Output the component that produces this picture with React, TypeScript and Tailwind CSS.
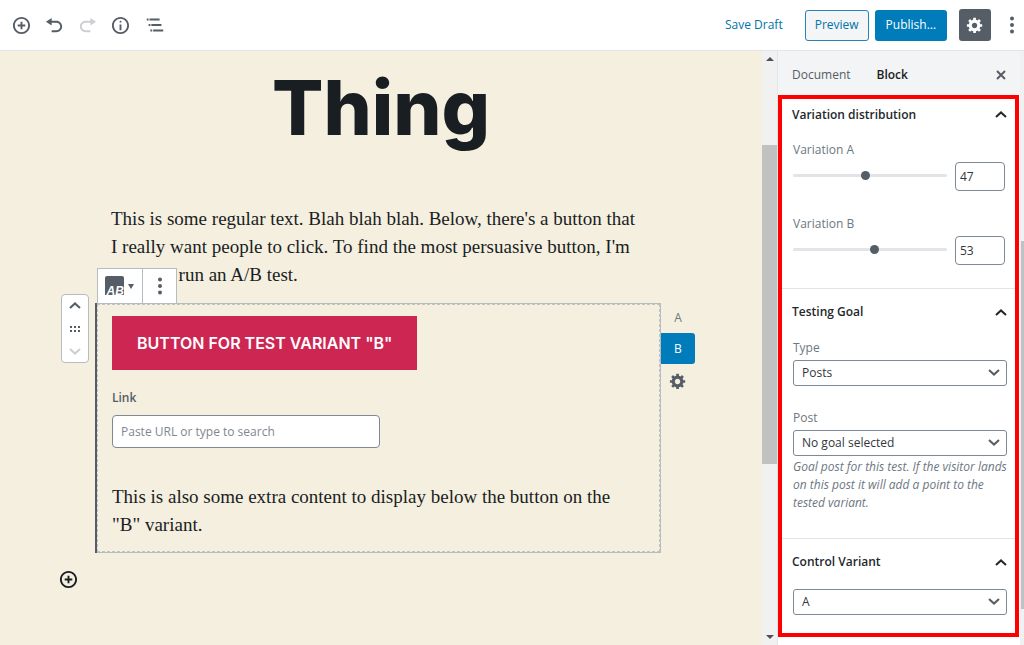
import { useState, type ReactNode } from 'react';

const paths = {
  insert:
    'M10 1c-5 0-9 4-9 9s4 9 9 9 9-4 9-9-4-9-9-9zm0 16c-3.9 0-7-3.1-7-7s3.1-7 7-7 7 3.1 7 7-3.1 7-7 7zm1-11H9v3H6v2h3v3h2v-3h3V9h-3V6z',
  undo: 'M12 5H7V2L1 6l6 4V7h5c2.2 0 4 1.8 4 4s-1.8 4-4 4H7v2h5c3.3 0 6-2.7 6-6s-2.7-6-6-6z',
  redo: 'M8 5h5V2l6 4-6 4V7H8c-2.2 0-4 1.8-4 4s1.8 4 4 4h5v2H8c-3.3 0-6-2.7-6-6s2.7-6 6-6z',
  info: 'M9 15h2V9H9v6zm1-10c-.5 0-1 .5-1 1s.5 1 1 1 1-.5 1-1-.5-1-1-1zm0-4c-5 0-9 4-9 9s4 9 9 9 9-4 9-9-4-9-9-9zm0 16c-3.9 0-7-3.1-7-7s3.1-7 7-7 7 3.1 7 7-3.1 7-7 7z',
  gear: 'M18 12h-2.18c-.17.7-.44 1.35-.81 1.93l1.54 1.54-2.1 2.1-1.54-1.54c-.58.36-1.23.63-1.91.79V19H8v-2.18c-.68-.16-1.33-.43-1.91-.79l-1.54 1.54-2.12-2.12 1.54-1.54c-.36-.58-.63-1.23-.79-1.91H1V9.03h2.17c.16-.7.44-1.35.8-1.94L2.43 5.55l2.1-2.1 1.54 1.54c.58-.37 1.24-.64 1.93-.81V2h3v2.18c.68.16 1.33.43 1.91.79l1.54-1.54 2.12 2.12-1.54 1.54c.36.59.64 1.24.8 1.94H18V12zm-8.5 1.5c1.66 0 3-1.34 3-3s-1.34-3-3-3-3 1.34-3 3 1.34 3 3 3z',
};

function Icon({ name, className = 'size-[19px]' }: { name: keyof typeof paths; className?: string }) {
  return (
    <svg viewBox="0 0 20 20" fill="currentColor" className={className} aria-hidden="true">
      <path d={paths[name]} />
    </svg>
  );
}

function Dots({ className = 'h-[18px] w-1' }: { className?: string }) {
  return (
    <svg viewBox="0 0 4 18" fill="currentColor" className={className} aria-hidden="true">
      <circle cx="2" cy="2.500" r="2" />
      <circle cx="2" cy="9" r="2" />
      <circle cx="2" cy="15.500" r="2" />
    </svg>
  );
}

function Chevron({ up = false, className = 'h-[7px] w-3' }: { up?: boolean; className?: string }) {
  return (
    <svg viewBox="0 0 12 7" fill="none" stroke="currentColor" strokeWidth="2" className={className} aria-hidden="true">
      <path d={up ? 'M1 6l5-4.6L11 6' : 'M1 1l5 4.6L11 1'} />
    </svg>
  );
}

function Header() {
  return (
    <header className="flex h-[51px] shrink-0 items-center justify-between border-b border-[#e2e4e7] bg-white pr-[10px] pl-3 text-[#555d66]">
      <div className="flex items-center gap-[14px]">
        <button aria-label="Add block"><Icon name="insert" /></button>
        <button aria-label="Undo"><Icon name="undo" /></button>
        <button aria-label="Redo" disabled className="text-[#ccced1]"><Icon name="redo" /></button>
        <button aria-label="Content structure"><Icon name="info" /></button>
        <button aria-label="Block navigation">
          <svg viewBox="0 0 24 24" fill="currentColor" className="size-[22px]" aria-hidden="true">
            <path d="M5 5H3v2h2V5zm3 8h11v-2H8v2zm9-8H6v2h11V5zM7 11H5v2h2v-2zm0 8h2v-2H7v2zm3-2v2h11v-2H10z" />
          </svg>
        </button>
      </div>
      <div className="flex items-center text-[12px]">
        <button className="mr-[22px] text-[#0073aa]">Save Draft</button>
        <button className="mr-[6px] h-[31px] rounded-[3px] border border-[#2584b5] bg-[#f3f5f6] px-[9px] text-[#0073aa]">Preview</button>
        <button className="mr-3 h-[31px] rounded-[3px] bg-[#007cba] px-[11px] text-white">Publish…</button>
        <button aria-label="Settings" className="mr-[19px] flex size-[32px] items-center justify-center rounded-[3px] bg-[#555d66] text-white">
          <Icon name="gear" className="size-[18px]" />
        </button>
        <button aria-label="More tools"><Dots /></button>
      </div>
    </header>
  );
}

function BlockToolbar() {
  return (
    <div className="absolute -top-[35px] left-0 flex h-[36px] border border-[#b5bcc2] bg-white text-[#555d66]">
      <button aria-label="Change block type" className="flex w-[45px] items-center justify-center gap-[3px] border-r border-[#b5bcc2] pr-[2px]">
        <svg viewBox="0 0 20 20" className="size-5 overflow-visible" aria-hidden="true">
          <path fill="currentColor" d="M2 0h15a2 2 0 0 1 2 2v17H0V2a2 2 0 0 1 2-2z" />
          <text x="1.500" y="19" fill="#fff" className="font-['Liberation_Sans',sans-serif] text-[12px] font-bold italic">AB</text>
        </svg>
        <svg viewBox="0 0 6 5" className="h-[5px] w-[6px]" aria-hidden="true"><path fill="currentColor" d="M0 0h6L3 5z" /></svg>
      </button>
      <button aria-label="More options" className="flex w-[33px] items-center justify-center"><Dots /></button>
    </div>
  );
}

function Mover() {
  return (
    <div className="absolute -top-[9px] -left-[36px] flex h-[69px] w-[28px] flex-col items-center justify-between rounded-[4px] border border-[#b5bcc2] bg-white py-[7px] text-[#555d66]">
      <button aria-label="Move up" className="flex"><Chevron up /></button>
      <svg viewBox="0 0 10 6" fill="currentColor" className="h-[6px] w-[10px]" aria-hidden="true">
        <path d="M0 0h2v2H0zM4 0h2v2H4zM8 0h2v2H8zM0 4h2v2H0zM4 4h2v2H4zM8 4h2v2H8z" />
      </svg>
      <button aria-label="Move down" disabled className="flex text-[#ccced1]"><Chevron /></button>
    </div>
  );
}

function VariantTabs() {
  return (
    <div className="absolute top-0 left-full flex w-[34px] flex-col items-center text-[12px] text-[#6c7781]">
      <button className="h-[30px] w-full">A</button>
      <button className="h-[31px] w-full rounded-r-[3px] bg-[#007cba] text-white">B</button>
      <button aria-label="Variant settings" className="mt-2 text-[#555d66]"><Icon name="gear" className="size-[18px]" /></button>
    </div>
  );
}

function Canvas() {
  return (
    <main className="min-w-0 flex-1 overflow-hidden bg-[#f5efe0] text-[#191e23]">
      <div className="mx-auto w-[540px] max-w-full pt-4">
        <h1 className="text-center font-[Inter] text-[76px] leading-[80px] font-extrabold">Thing</h1>
        <p className="mt-[58px] max-w-[528px] font-['Liberation_Serif',serif] text-[19px] leading-[28px]">
          This is some regular text. Blah blah blah. Below, there's a button that I really want people to click. To
          find the most persuasive button, I'm going to run an A/B test.
        </p>
        <section className="relative mt-[14px] -mr-[10px] -ml-4 border-l-2 border-[#555d66]">
          <div className="border border-l-0 border-[#b5bcc2]">
            <div className="border border-dashed border-[#bfc3c4] px-[14px] pt-[11px] pb-3">
              <button className="block h-[54px] bg-[#cd2653] px-[25px] font-[Inter] text-[16px] font-semibold text-white">
                BUTTON FOR TEST VARIANT "B"
              </button>
              <label htmlFor="link" className="mt-[19px] block text-[12px] leading-[18px] font-semibold text-[#555d66]">Link</label>
              <input
                id="link"
                placeholder="Paste URL or type to search"
                className="mt-2 block h-[33px] w-[268px] rounded-[4px] border border-[#7e8993] bg-white px-2 text-[12px] placeholder:text-[#808790]"
              />
              <p className="mt-[35px] max-w-[528px] font-['Liberation_Serif',serif] text-[19px] leading-[28px]">
                This is also some extra content to display below the button on the "B" variant.
              </p>
            </div>
          </div>
          <BlockToolbar />
          <Mover />
          <VariantTabs />
        </section>
        <button aria-label="Add block" className="mt-[17px] -ml-[52px] flex"><Icon name="insert" /></button>
      </div>
    </main>
  );
}

function CanvasScrollbar() {
  return (
    <div className="flex w-[15px] shrink-0 flex-col items-center bg-[#f1f1f1] py-[6px] text-[#505050]" aria-hidden="true">
      <svg viewBox="0 0 8 4" className="h-1 w-2"><path fill="currentColor" d="M0 4h8L4 0z" /></svg>
      <div className="mt-[84px] h-[319px] w-full bg-[#c1c1c1]" />
      <svg viewBox="0 0 8 4" className="mt-auto h-1 w-2"><path fill="currentColor" d="M0 0h8L4 4z" /></svg>
    </div>
  );
}

function PanelHeading({ children, compact = false }: { children: ReactNode; compact?: boolean }) {
  return (
    <h2 className="text-[12px] font-semibold text-[#23282d]">
      <button className={`flex w-full items-center justify-between pr-[8px] pl-[10px] ${compact ? 'h-[31px]' : 'h-[46px]'}`}>
        {children}
        <Chevron up />
      </button>
    </h2>
  );
}

function RangeField({ id, label, value, onChange }: { id: string; label: string; value: number; onChange: (v: number) => void }) {
  return (
    <div>
      <label htmlFor={id} className="block text-[12px] leading-5 text-[#6c7781]">{label}</label>
      <div className="mt-[2px] flex items-start">
        <input
          id={id}
          type="range"
          value={value}
          onChange={(e) => onChange(Number(e.target.value))}
          className="h-[27px] min-w-0 flex-1 appearance-none bg-transparent [&::-webkit-slider-runnable-track]:h-[3px] [&::-webkit-slider-runnable-track]:rounded-full [&::-webkit-slider-runnable-track]:bg-[#e2e4e7] [&::-webkit-slider-thumb]:-mt-[3px] [&::-webkit-slider-thumb]:size-[9px] [&::-webkit-slider-thumb]:appearance-none [&::-webkit-slider-thumb]:rounded-full [&::-webkit-slider-thumb]:bg-[#555d66]"
        />
        <input
          aria-label={`${label} percent`}
          value={value}
          onChange={(e) => onChange(Number(e.target.value) || 0)}
          className="mr-[2px] ml-2 h-[29px] w-[50px] rounded-[4px] border border-[#7e8993] bg-white px-1 text-[12px] font-medium text-[#32373c]"
        />
      </div>
    </div>
  );
}

function SelectField({ id, label, option, hideLabel = false }: { id: string; label: string; option: string; hideLabel?: boolean }) {
  return (
    <div>
      {!hideLabel && <label htmlFor={id} className="mb-[2px] block text-[12px] leading-5 text-[#6c7781]">{label}</label>}
      <div className="relative">
        <select
          id={id}
          aria-label={hideLabel ? label : undefined}
          className="block h-[26px] w-full appearance-none rounded-[3px] border border-[#7e8993] bg-white px-2 text-[12px] text-[#32373c]"
        >
          <option>{option}</option>
        </select>
        <Chevron className="pointer-events-none absolute top-[9px] right-[7px] h-[7px] w-3 text-[#555d66]" />
      </div>
    </div>
  );
}

function Sidebar() {
  const [a, setA] = useState(47);
  return (
    <aside className="flex w-[243px] shrink-0 flex-col border-l border-[#e2e4e7] bg-white">
      <div className="flex h-11 shrink-0 items-center bg-[#f3f4f5] pt-1 pr-[14px] pl-[14px] text-[12px]">
        <button className="mr-[26px] text-[#555d66]">Document</button>
        <button className="font-semibold text-[#191e23]">Block</button>
        <button aria-label="Close settings" className="ml-auto text-[#555d66]">
          <svg viewBox="0 0 10 10" fill="none" stroke="currentColor" strokeWidth="2" className="size-[10px]" aria-hidden="true">
            <path d="M1 1l8 8M9 1L1 9" />
          </svg>
        </button>
      </div>
      <div className="mr-[1px] border-4 border-[#ff0000] bg-white">
        <section className="border-b border-[#e2e4e7]">
          <PanelHeading compact>Variation distribution</PanelHeading>
          <div className="flex flex-col gap-[23px] pt-[10px] pr-2 pb-[23px] pl-[11px]">
            <RangeField id="a" label="Variation A" value={a} onChange={setA} />
            <RangeField id="b" label="Variation B" value={100 - a} onChange={(v) => setA(100 - v)} />
          </div>
        </section>
        <section className="border-b border-[#e2e4e7]">
          <PanelHeading>Testing Goal</PanelHeading>
          <div className="flex flex-col gap-[22px] pt-[3px] pr-2 pl-[11px]">
            <SelectField id="type" label="Type" option="Posts" />
            <SelectField id="post" label="Post" option="No goal selected" />
          </div>
          <p className="pt-[2px] pr-2 pb-[26px] pl-[11px] text-[12px] leading-[18px] text-[#6c7781] italic">
            Goal post for this test. If the visitor lands on this post it will add a point to the tested variant.
          </p>
        </section>
        <section>
          <PanelHeading>Control Variant</PanelHeading>
          <div className="pt-1 pr-2 pb-[18px] pl-[11px]">
            <SelectField id="control" label="Control Variant" option="A" hideLabel />
          </div>
        </section>
      </div>
    </aside>
  );
}

export default function App() {
  return (
    <div className="flex h-screen flex-col overflow-hidden bg-white font-['Open_Sans','Noto_Sans',sans-serif]">
      <Header />
      <div className="flex min-h-0 flex-1">
        <Canvas />
        <CanvasScrollbar />
        <Sidebar />
        <div className="w-1 shrink-0 bg-[#f1f1f1] pt-[190px]" aria-hidden="true">
          <div className="ml-px h-[368px] bg-[#c1c1c1]" />
        </div>
      </div>
    </div>
  );
}
